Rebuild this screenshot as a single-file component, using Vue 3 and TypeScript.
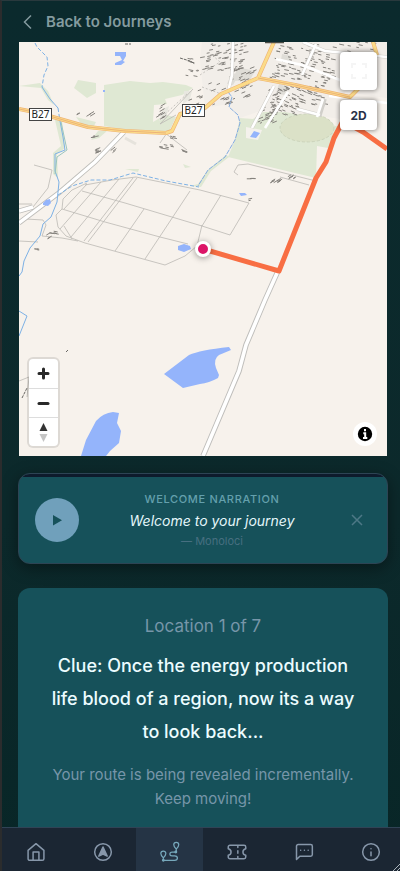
<script setup lang="ts">
import { ref } from 'vue'

interface NavItem { id: string; label: string }
interface Cluster { x: number; y: number; w: number; h: number; n: number; skew: number; tilt: number }

const navItems: NavItem[] = [
  { id: 'home', label: 'Home' },
  { id: 'explore', label: 'Explore' },
  { id: 'journeys', label: 'Journeys' },
  { id: 'tickets', label: 'Tickets' },
  { id: 'chat', label: 'Chat' },
  { id: 'about', label: 'About' },
]
const active = ref('journeys')
const narrationOpen = ref(true)

// Building footprints: x/y origin, extent, count, horizontal shear and dash tilt
const clusters: Cluster[] = [
  { x: 200, y: 44, w: 44, h: 28, n: 62, skew: 0, tilt: -1 },
  { x: 232, y: 66, w: 24, h: 34, n: 32, skew: -8, tilt: -2 },
  { x: 277, y: 44, w: 40, h: 36, n: 70, skew: -8, tilt: 1 },
  { x: 314, y: 46, w: 22, h: 42, n: 40, skew: -6, tilt: 1 },
  { x: 277, y: 86, w: 34, h: 28, n: 64, skew: -10, tilt: 2 },
  { x: 268, y: 90, w: 18, h: 34, n: 44, skew: -12, tilt: -2 },
  { x: 310, y: 92, w: 14, h: 14, n: 12, skew: 0, tilt: 1 },
  { x: 206, y: 82, w: 20, h: 24, n: 12, skew: 6, tilt: -2 },
  { x: 184, y: 58, w: 16, h: 18, n: 10, skew: 0, tilt: 1 },
  { x: 188, y: 90, w: 12, h: 20, n: 7, skew: 0, tilt: -2 },
  { x: 153, y: 106, w: 8, h: 17, n: 10, skew: 4, tilt: -3 },
  { x: 76, y: 114, w: 15, h: 4, n: 5, skew: 0, tilt: -3 },
  { x: 90, y: 135, w: 6, h: 3, n: 4, skew: 0, tilt: -1 },
  { x: 93, y: 148, w: 6, h: 6, n: 7, skew: 0, tilt: -2 },
  { x: 109, y: 150, w: 7, h: 4, n: 3, skew: 0, tilt: -4 },
  { x: 159, y: 144, w: 12, h: 5, n: 8, skew: 0, tilt: 1 },
  { x: 169, y: 135, w: 5, h: 3, n: 4, skew: 0, tilt: 1 },
  { x: 178, y: 149, w: 7, h: 2, n: 4, skew: 0, tilt: 2 },
  { x: 47, y: 231, w: 8, h: 3, n: 6, skew: 0, tilt: 1 },
  { x: 46, y: 235, w: 2, h: 5, n: 3, skew: 0, tilt: -3 },
  { x: 34, y: 247, w: 5, h: 3, n: 4, skew: 0, tilt: 1 },
  { x: 245, y: 178, w: 10, h: 1, n: 4, skew: 0, tilt: 0 },
  { x: 269, y: 180, w: 12, h: 3, n: 9, skew: 0, tilt: -3 },
  { x: 287, y: 176, w: 7, h: 3, n: 5, skew: 0, tilt: -3 },
  { x: 247, y: 199, w: 3, h: 2, n: 2, skew: 0, tilt: -1 },
  { x: 339, y: 42, w: 44, h: 9, n: 10, skew: 0, tilt: 1 },
]

function footprints(list: Cluster[]): string {
  let seed = 7
  const rnd = () => {
    seed = (seed * 16807) % 2147483647
    return seed / 2147483647
  }
  let d = ''
  for (const c of list) {
    for (let i = 0; i < c.n; i++) {
      const v = rnd()
      const x = c.x + rnd() * c.w + c.skew * v
      const y = c.y + v * c.h
      const len = 2 + rnd() * 3
      d += `M${x.toFixed(1)} ${y.toFixed(1)}l${len.toFixed(1)} ${((c.tilt * len) / 5).toFixed(1)}`
    }
  }
  return d
}
const buildings = footprints(clusters)
</script>

<template>
  <div class="shell">
    <main class="content">
      <a class="back" href="#journeys">
        <svg class="back-icon" viewBox="0 0 20 20"><path d="M13 3.500 6.500 10l6.500 6.500" /></svg>
        <span>Back to Journeys</span>
      </a>

      <section class="map" aria-label="Route map">
        <svg class="map-art" viewBox="19 42 368 414" preserveAspectRatio="xMidYMid slice">
          <rect x="19" y="42" width="368" height="414" fill="#f7f2ec" />
          <path d="M202 42H387V98L345 92 348 120 320 116 260 111 240 118 228 104 205 108 200 60Z" fill="#f2eee9" />
          <g fill="#dfe8d3">
            <path d="M104 85 130 81 150 83 163 82 186 85 193 88 182 95 165 99 167 104 154 105 153 122 165 115 176 117 169 132 130 131 104 126Z" />
            <path d="M78 80 96 83 96 93 87 98 74 88Z" />
            <path d="M19 86 40 83 48 91 54 105 48 100 41 88Z" />
            <path d="M55 120 62 120 65 148 57 154 58 178 53 174 53 153 61 146Z" />
            <path d="M76 117 96 122 93 128 82 125ZM98 131 107 131 99 138 91 140Z" />
            <path d="M125 169 139 169 138 172ZM183 164 191 167 185 168Z" />
            <path d="M240 118 253 119 263 112 285 112 315 118 341 128 328 148 317 146 316 178 228 157 235 140Z" />
            <path d="M190 186 198 184 208 170 226 155 229 157 211 171 201 187Z" />
          </g>
          <path d="M246 127 262 130 258 140 246 138Z" fill="#f4f1ec" />
          <ellipse cx="307" cy="128" rx="27" ry="14" fill="#dbe1c7" stroke="#c3ccb3" stroke-width=".7" stroke-dasharray="3 2" />
          <path d="M184 91h8l-2 8-7 5ZM163 109l6-3-3 12-7 3Z" fill="#e8e7e0" />
          <path d="M237 67l18 4-5 9-16 1ZM231 75l10-4-8 14-6-1ZM279 84l10 3-5 8-8-2ZM282 54l9 2-2 6-8-2Z" fill="#dfddd7" />

          <g fill="none" stroke="#bbb9b4" stroke-width=".8">
            <path d="M87 183 72 190 63 199 62 209 56 215 58 227 66 236 85 243 165 265 185 256 197 246 202 225" />
            <path d="M82 191 125 203 202 226M62 209 105 222 160 237 188 244M85 185 112 180 136 177 200 190 249 203 230 235 202 226" />
            <path d="M87 184 64 209M101 182 60 229M119 179 71 237M133 178 84 241M137 178 88 242M144 209 115 251M190 191 145 259M221 195 202 226M64 226 72 239" />
            <path d="M19 204 32 204M26 219 43 220 46 225 42 236 62 238 78 241M19 241 38 242M34 165 52 170 48 188 33 207" />
            <path d="M19 381 29 377 27 397M165 133 187 150M167 133 160 143M193 89 160 124 176 115M234 172 238 165 248 164 316 181M234 172 238 175M280 177 309 185" />
            <path d="M202 87 224 95M200 75 220 62 211 54M162 117 188 93" stroke-dasharray="2 2" />
          </g>
          <path d="M124 132 95 162 60 192 19 223M19 211 33 207" fill="none" stroke="#bdbcb8" stroke-width="5" />
          <path d="M124 132 95 162 60 192 19 223M19 211 33 207" fill="none" stroke="#fff" stroke-width="3.400" />

          <path :d="buildings" stroke="#85827d" stroke-width="1" fill="none" />

          <g fill="none" stroke="#d1cfca" stroke-width="3.600">
            <path d="M233 42 232 75 228 92M316 44 302 75M274 86 252 128M297 109 320 115 325 99M303 42 325 51 387 57" />
          </g>
          <g fill="none" stroke="#fff" stroke-width="2.600">
            <path d="M233 42 232 75 228 92M316 44 302 75M274 86 252 128M276 59 302 65 345 82M323 99 317 117M297 109 320 115M288 92 265 128M303 42 325 51 387 57M329 96 387 103" />
          </g>
          <path d="M228 92 232 97 229 107 238 115 240 123 235 140 225 157 208 170 198 186" fill="none" stroke="#82abe0" stroke-dasharray="5 1" />
          <g fill="none" stroke="#7db1e5" stroke-width="1">
            <path d="M42 87 50 99 58 108M60 121 63 137 65 150 55 154 55 171 59 182 57 202 51 217 43 224 40 236 30 248 24 261 22 272 19 276" />
            <path d="M35 43 37 47 47 57 48 66 44 75 42 87M58 108 60 121M58 195 72 186 91 180 110 180 133 173 166 181 199 187" stroke-dasharray="4 2" />
            <path d="M19 311 27 316 19 336" />
          </g>
          <path d="M61 122 64 136 67 150 57 157 55 174" fill="none" stroke="#9ac5bd" stroke-width="1" />

          <g fill="#94b4fb">
            <path d="M115 52h11v4l-3 5 2 1-4 3h-6v-2l7-3-2-4h-5Z" />
            <path d="M103 90h2v2h-2ZM254 131 260 133 256 138 250 137Z" />
            <path d="M43 203 46 200 50 199 51 203 48 206 43 205Z" />
            <path d="M178 246 184 244 190 246 191 249 184 252 178 250Z" />
            <path d="M239 193 245 193 247 195 241 196Z" />
            <path d="M164 374 189 355Q200 350 229 347L231 350 219 355Q213 359 216 368L219 375 218 378Q209 383 200 384L183 388Z" />
            <path d="M81 456 86 440 96 421Q103 413 113 412L119 413 117 423 121 431 119 443 110 451 106 456Z" />
          </g>

          <g fill="none" stroke-linejoin="round">
            <path d="M19 109 39 113 88 127 125 131 166 133 172 131 180 114 205 108 221 94 258 78 274 42M258 78 295 85 350 97 364 83M373 42 377 55" stroke="#efb273" stroke-width="4" />
            <path d="M19 109 39 113 88 127 125 131 166 133 172 131 180 114 205 108 221 94 258 78 274 42M258 78 295 85 350 97 364 83M373 42 377 55" stroke="#fbdb88" stroke-width="2.800" />
            <path d="M19 109 39 113 88 127 125 131 166 133M258 78 295 85 350 97" stroke="#e9a875" stroke-width=".8" />
          </g>
          <path d="M180 58 190 61 195 64M125 44H131M66 352 68 350M22 398 27 388" stroke="#696864" stroke-width="1" stroke-dasharray="3 1" fill="none" />
          <path d="M125 138 136 144" stroke="#e6e3dc" stroke-width="3" />

          <g fill="none">
            <path d="M278 271 265 300 246 345 239 371 203 456" stroke="#bfbebb" stroke-width="5.500" />
            <path d="M278 271 265 300 246 345 239 371 203 456" stroke="#fff" stroke-width="3.600" />
            <path d="M203 249 279 271 316 178 326 162 334 138 343 121 363 132 387 149" stroke="#f86e43" stroke-width="5" stroke-linejoin="round" />
          </g>
          <g class="road-sign">
            <rect x="29.500" y="108.500" width="22" height="12" />
            <text x="40.500" y="118">B27</text>
            <rect x="182.500" y="104.500" width="22" height="12" />
            <text x="193.500" y="114">B27</text>
          </g>
          <path d="M265 42.500H284" stroke="#4d4d46" stroke-width="1.500" />
          <circle class="marker" cx="203" cy="249" r="6.500" />
        </svg>

        <div class="map-tools">
          <button class="tool tool-full" type="button" aria-label="Fullscreen">
            <svg viewBox="0 0 20 20"><path d="M3 7V3h4M13 3h4v4M17 13v4h-4M7 17H3v-4" /></svg>
          </button>
          <button class="tool" type="button">2D</button>
        </div>
        <div class="zoom">
          <button type="button" aria-label="Zoom in"><svg viewBox="0 0 29 29"><path d="M14.500 10v9M10 14.500h9" /></svg></button>
          <button type="button" aria-label="Zoom out"><svg viewBox="0 0 29 29"><path d="M10 14.500h9" /></svg></button>
          <button type="button" aria-label="Reset bearing">
            <svg viewBox="0 0 29 29"><path class="solid" d="m10.500 13 4-8 4 8Z" /><path class="south" d="m10.500 16 4 8 4-8Z" /></svg>
          </button>
        </div>
        <button class="attribution" type="button" aria-label="Attribution">
          <svg viewBox="0 0 24 24"><circle cx="12" cy="12" r="7.200" /><path d="M12 7v2.200M10.300 11.200H12.200v5M10 16h4.300" /></svg>
        </button>
      </section>

      <section v-if="narrationOpen" class="narration">
        <button class="play" type="button" aria-label="Play narration">
          <svg viewBox="0 0 16 16"><path d="M4 3v10.500L13 8.200Z" /></svg>
        </button>
        <div class="narration-text">
          <p class="kicker">Welcome narration</p>
          <p class="quote">Welcome to your journey</p>
          <p class="author">— Monoloci</p>
        </div>
        <button class="close" type="button" aria-label="Dismiss" @click="narrationOpen = false">
          <svg viewBox="0 0 16 16"><path d="m3 3 10 10M13 3 3 13" /></svg>
        </button>
      </section>

      <section class="clue">
        <p class="step">Location 1 of 7</p>
        <h1>Clue: Once the energy production life blood of a region, now its a way to look back...</h1>
        <p class="hint">Your route is being revealed incrementally. Keep moving!</p>
      </section>
    </main>

    <nav class="tabs" aria-label="Main">
      <a
        v-for="item in navItems"
        :key="item.id"
        :href="'#' + item.id"
        :aria-label="item.label"
        :class="['tab', { active: active === item.id }]"
        @click="active = item.id"
      >
        <svg v-if="item.id === 'home'" viewBox="0 0 24 24"><path d="m2.500 10 9.500-8 9.500 8V20a2 2 0 0 1-2 2h-15a2 2 0 0 1-2-2ZM8.500 22V12h7v10" /></svg>
        <svg v-else-if="item.id === 'explore'" viewBox="0 0 24 24"><circle cx="12" cy="12" r="10" /><path class="fill" d="m12 6 5 11-5-2.500L7 17Z" /></svg>
        <svg v-else-if="item.id === 'journeys'" class="route" viewBox="0 0 24 24">
          <path d="M19 12H14.500c-3.500 0-3.500 4.500 0 4.500h3c4.500 0 4.500 5.500 0 5.500H4" />
          <path d="M19.500 8.500s-3-3-3-5.200a3 3 0 0 1 6 0c0 2.200-3 5.200-3 5.200ZM19.500 8.500v3M4 19s-3-3-3-5.200a3 3 0 0 1 6 0c0 2.200-3 5.200-3 5.200ZM4 19v3" />
          <circle class="fill" cx="19" cy="12" r="1" /><circle class="fill" cx="4" cy="22" r="1" />
        </svg>
        <svg v-else-if="item.id === 'tickets'" viewBox="0 0 24 24"><path d="M1.500 8V6a2 2 0 0 1 2-2h17a2 2 0 0 1 2 2v2c-4.500 1-4.500 7 0 8v2a2 2 0 0 1-2 2h-17a2 2 0 0 1-2-2v-2c4.500-1 4.500-7 0-8ZM13 4v2.500M13 10.500v3M13 17.500v2.500" /></svg>
        <svg v-else-if="item.id === 'chat'" viewBox="0 0 24 24"><path d="M22 15a2 2 0 0 1-2 2H7l-4 4V5a2 2 0 0 1 2-2h15a2 2 0 0 1 2 2ZM8 10h.01M12.500 10h.01M17 10h.01" /></svg>
        <svg v-else viewBox="0 0 24 24"><circle cx="12" cy="12" r="10" /><path d="M12 16.500V12M12 8h.01" /></svg>
      </a>
      <svg class="grip" viewBox="0 0 8 8"><path d="M1 8 8 1M5 8l3-3" /></svg>
    </nav>
  </div>
</template>

<style>
body { background: #0b282b; }
</style>

<style scoped>
* { box-sizing: border-box; }
p, h1 { margin: 0; }
button { padding: 0; border: 0; font: inherit; cursor: pointer; }
svg { display: block; }

.shell {
  display: flex;
  flex-direction: column;
  height: 100vh;
  border-top: 1px solid #29393d;
  border-left: 2px solid #2b2c2d;
  background: linear-gradient(#0b2a2d, #0c292b 60%, #082627);
  font-family: Inter, "Liberation Sans", sans-serif;
}
.content {
  display: flex;
  flex: 1;
  flex-direction: column;
  min-height: 0;
  padding: 0 12px 0 16px;
  overflow-y: auto;
  scrollbar-width: none;
}
.content > * { flex-shrink: 0; }

.back {
  display: flex;
  align-items: center;
  gap: 8px;
  height: 41px;
  color: #849b9f;
  font-size: 15px;
  font-weight: 600;
  text-decoration: none;
}
.back-icon { width: 20px; height: 20px; fill: none; stroke: currentColor; stroke-width: 1.500; }

.map {
  position: relative;
  margin: 0 1px 17px;
  aspect-ratio: 368 / 414;
}
.map-art { width: 100%; height: 100%; }
.road-sign rect { fill: #fff; stroke: #444; }
.road-sign text { fill: #222; font: 10px "Noto Sans", sans-serif; text-anchor: middle; }
.marker { fill: #dc1568; stroke: #fff; stroke-width: 3; filter: drop-shadow(0 1px 3px #0006); }

.map-tools {
  position: absolute;
  top: 10px;
  right: 10px;
  display: flex;
  flex-direction: column;
  gap: 10px;
}
.tool {
  width: 37px;
  height: 30px;
  border-radius: 4px;
  background: #fff;
  box-shadow: 0 0 4px 1px #0006;
  color: #273047;
  font-size: 12px;
  font-weight: 700;
}
.tool-full { display: grid; place-items: center; height: 38px; }
.tool-full svg { width: 20px; fill: none; stroke: #f5f5f5; stroke-width: 2; }

.zoom {
  position: absolute;
  bottom: 10px;
  left: 10px;
  width: 29px;
  border-radius: 4px;
  background: #fff;
  box-shadow: 0 0 0 2px #0000001a;
}
.zoom button { display: block; width: 100%; height: 29px; background: none; }
.zoom button + button { border-top: 1px solid #ddd; }
.zoom svg { width: 29px; height: 29px; fill: none; stroke: #292929; stroke-width: 3; stroke-linecap: round; }
.zoom .solid { fill: #333; stroke: none; }
.zoom .south { fill: #c5c5c5; stroke: none; }

.attribution {
  position: absolute;
  right: 10px;
  bottom: 10px;
  width: 24px;
  height: 24px;
  border-radius: 50%;
  background: #fff;
}
.attribution svg { width: 24px; height: 24px; }
.attribution path { fill: none; stroke: #fff; stroke-width: 2; }

.narration {
  display: flex;
  align-items: center;
  height: 91px;
  margin-bottom: 24px;
  padding: 3px 16px 0;
  border: 1px solid #2d4454;
  border-radius: 12px;
  background: linear-gradient(#0e1b2c 3px, #16515a 3px);
  box-shadow: 0 4px 16px #0006;
  text-align: center;
}
.play {
  display: grid;
  place-items: center;
  width: 44px;
  height: 44px;
  border-radius: 50%;
  background: #70a0bb;
}
.play svg { width: 16px; height: 16px; fill: #16515a; }
.narration-text { flex: 1; padding-left: 2px; }
.kicker {
  color: #64a0ad;
  font-size: 11px;
  font-weight: 500;
  line-height: 16px;
  letter-spacing: 0.06em;
  text-transform: uppercase;
}
.quote {
  margin-top: 3px;
  color: #e5f7fb;
  font-size: 14px;
  font-style: italic;
  line-height: 22px;
}
.author { color: #476f80; font-size: 11px; line-height: 18px; }
.close { display: grid; place-items: center; width: 28px; height: 28px; background: none; color: #4d7886; }
.close svg { width: 16px; height: 16px; fill: none; stroke: currentColor; stroke-width: 1.500; }

.clue {
  padding: 24px 28px 32px;
  border-radius: 12px;
  background: #16515a;
  text-align: center;
}
.step { color: #7796a9; font-size: 17px; line-height: 29px; }
.clue h1 {
  margin: 8px 0 15px;
  color: #ecfcff;
  font-size: 18px;
  font-weight: 500;
  line-height: 33px;
}
.hint { color: #7796a9; font-size: 15px; line-height: 24px; }

.tabs {
  position: relative;
  display: flex;
  height: 44px;
  border-top: 1px solid #304355;
  background: #1b2633;
  overflow: hidden;
}
.tab { display: grid; flex: 1 0 67px; place-items: center; padding-top: 4px; color: #8797aa; }
.tab.active { background: #253445; color: #77a9bc; }
.tab svg { width: 20px; height: 20px; fill: none; stroke: currentColor; stroke-width: 1.800; stroke-linecap: round; stroke-linejoin: round; overflow: visible; }
.tab .route { stroke-width: 1.500; }
.tab .fill { fill: currentColor; }
.tabs .grip {
  position: absolute;
  right: 0;
  bottom: 0;
  width: 8px;
  height: 8px;
  fill: none;
  stroke: #aab3ba;
}
</style>
